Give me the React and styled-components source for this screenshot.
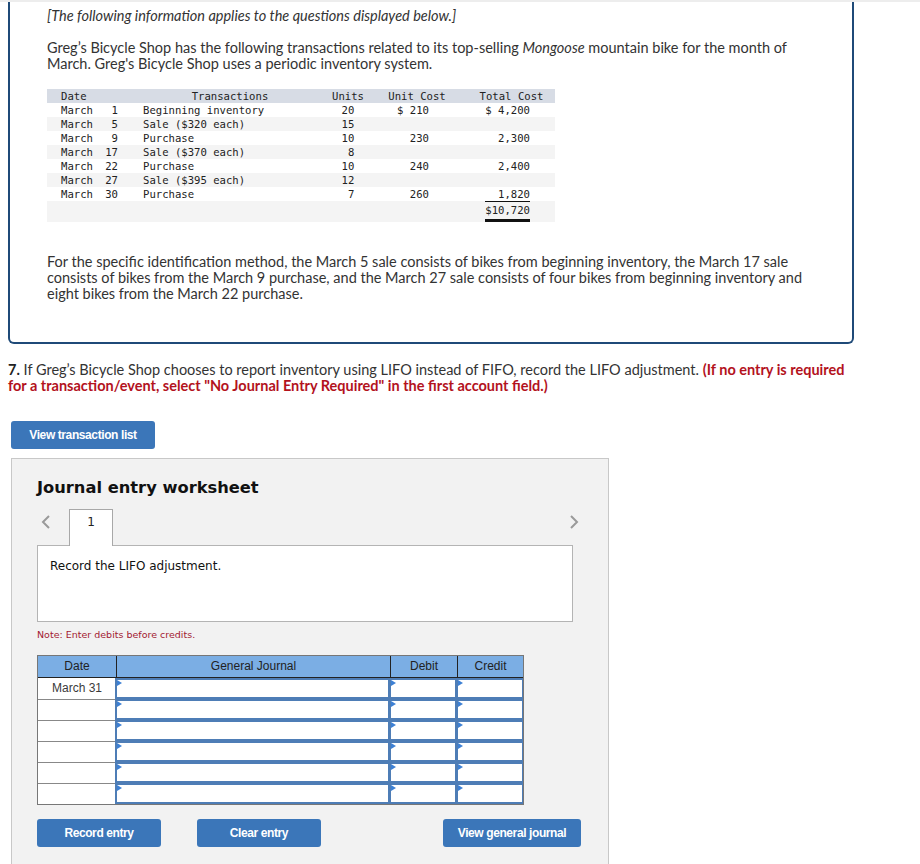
import React from 'react';
import styled, { createGlobalStyle } from 'styled-components';

const GlobalStyle = createGlobalStyle`
  body {
    margin: 0;
    background: #fff;
    font-family: 'Lato', 'Open Sans', sans-serif;
    color: #333;
  }
`;

const transactions = [
  { day: '1', label: 'Beginning inventory', units: '20', unitCost: '$ 210', total: '$ 4,200' },
  { day: '5', label: 'Sale ($320 each)', units: '15', unitCost: '', total: '' },
  { day: '9', label: 'Purchase', units: '10', unitCost: '230', total: '2,300' },
  { day: '17', label: 'Sale ($370 each)', units: ' 8', unitCost: '', total: '' },
  { day: '22', label: 'Purchase', units: '10', unitCost: '240', total: '2,400' },
  { day: '27', label: 'Sale ($395 each)', units: '12', unitCost: '', total: '' },
  { day: '30', label: 'Purchase', units: ' 7', unitCost: '260', total: '1,820', underline: true },
];

const journalRows = ['March 31', '', '', '', '', ''];

const Page = styled.div`
  border-top: 2px solid #ededed;
`;

const InfoBox = styled.div`
  margin-left: 8px;
  width: 846px;
  box-sizing: border-box;
  border: 2px solid #1f4a78;
  border-top: none;
  border-radius: 0 0 6px 6px;
  padding: 6px 38px 40px 37px;
`;

const Text = styled.p`
  margin: ${p => p.$top || 0}px 0 0;
  font-size: 14.5px;
  line-height: 16px;
  font-style: ${p => (p.$italic ? 'italic' : 'normal')};
`;

const DataTable = styled.div`
  margin-top: 17px;
  width: 508px;
  font-family: 'DejaVu Sans Mono', 'Liberation Mono', monospace;
  font-size: 10.6px;
  color: #222;
`;

const DataRow = styled.div`
  display: grid;
  grid-template-columns: 83px 200px 36px 102px 87px;
  height: ${p => (p.$total ? 21 : 14)}px;
  line-height: 14px;
  white-space: pre;
  background: ${p => (p.$head ? '#d7dce5' : p.$shade ? '#f4f4f4' : '#fff')};
`;

const DateCell = styled.div`
  display: flex;
  justify-content: space-between;
  padding: 0 12px 0 14px;
`;

const Cell = styled.div`
  text-align: ${p => p.$align || 'left'};
  padding-left: ${p => p.$pl || 0}px;
  padding-right: ${p => p.$pr || 0}px;
`;

const Amount = styled.span`
  display: inline-block;
  min-width: 7ch;
  text-align: right;
  border-bottom: ${p => (p.$double ? '3px solid #111' : p.$line ? '1px solid #111' : 'none')};
  line-height: ${p => (p.$double ? 18 : 13)}px;
`;

const Question = styled.div`
  margin: 18px 0 0 8px;
  max-width: 845px;
  font-size: 14.5px;
  line-height: 16px;
  color: #333;
`;

const Strong = styled.b`
  color: ${p => (p.$red ? '#b3121d' : '#222')};
`;

const BlueButton = styled.button`
  height: 28px;
  width: ${p => p.$w}px;
  border: none;
  border-radius: 3px;
  background: #3b76b9;
  color: #fff;
  font-family: 'Liberation Sans', Arial, sans-serif;
  font-weight: bold;
  font-size: 12px;
  letter-spacing: -0.4px;
  padding: 0;
  cursor: pointer;
`;

const TopButton = styled(BlueButton)`
  display: block;
  margin: 27px 0 0 11px;
`;

const Worksheet = styled.div`
  margin: 9px 0 0 11px;
  width: 598px;
  box-sizing: border-box;
  background: #f2f2f2;
  border: 1px solid #c8c8c8;
  border-bottom: none;
  padding: 19px 0 20px 25px;
`;

const Title = styled.h2`
  margin: 0;
  font-family: 'DejaVu Sans', Verdana, sans-serif;
  font-size: 16.3px;
  line-height: 20px;
  font-weight: bold;
  color: #111;
`;

const TabBar = styled.div`
  margin-top: 11px;
  width: 536px;
  height: 36px;
  display: flex;
  align-items: flex-start;
`;

const Arrow = styled.svg`
  flex: none;
  margin-top: 6px;
  margin-left: ${p => (p.$end ? 'auto' : '4px')};
  margin-right: ${p => (p.$end ? '-6px' : '0')};
`;

const Tab = styled.div`
  position: relative;
  z-index: 1;
  flex: none;
  margin-left: 18px;
  width: 44px;
  height: 37px;
  box-sizing: border-box;
  border: 1px solid #a8a8a8;
  border-bottom: none;
  background: #fff;
  text-align: center;
  font-family: 'DejaVu Sans', Verdana, sans-serif;
  font-size: 12px;
  line-height: 24px;
  color: #222;
`;

const Prompt = styled.div`
  width: 536px;
  height: 77px;
  box-sizing: border-box;
  background: #fff;
  border: 1px solid #b4b4b4;
  padding: 13px 12px;
  font-family: 'DejaVu Sans', Verdana, sans-serif;
  font-size: 12px;
  line-height: 14px;
  color: #111;
`;

const Note = styled.div`
  margin-top: 7px;
  font-family: 'DejaVu Sans', Verdana, sans-serif;
  font-size: 9.5px;
  line-height: 12px;
  color: #a31a33;
`;

const Journal = styled.div`
  margin-top: 14px;
  width: 485px;
  border: 1px solid #777;
  font-family: 'Liberation Sans', Arial, sans-serif;
  font-size: 12px;
  color: #222;
`;

const JournalRow = styled.div`
  display: grid;
  grid-template-columns: 78px 274px 67px 66px;
  height: 21px;
  background: ${p => (p.$head ? '#7baee4' : '#fff')};
  border-bottom: ${p => (p.$head ? '1px solid #222' : 'none')};
`;

const HeadCell = styled.div`
  text-align: center;
  line-height: 21px;
  border-left: ${p => (p.$first ? 'none' : '1px solid #222')};
`;

const DateEntry = styled.div`
  text-align: center;
  line-height: 20px;
  color: #3a3a3a;
  border-top: ${p => (p.$first ? 'none' : '1px solid #888')};
`;

const InputCell = styled.div`
  position: relative;
  background: #fff;
  border: 2px solid #4e7db6;
  border-right-width: ${p => (p.$last ? 1 : 2)}px;
  margin-left: -1px;
  &::before {
    content: '';
    position: absolute;
    top: 0;
    left: 0;
    border-style: solid;
    border-width: 3px 0 3px 5px;
    border-color: transparent transparent transparent #3d80d4;
  }
`;

const ButtonRow = styled.div`
  margin-top: 14px;
  width: 544px;
  display: flex;
  gap: 36px;
  & > :last-child {
    margin-left: auto;
  }
`;

const Chevron = ({ dir }) => (
  <Arrow $end={dir === 'right'} width="10" height="14" viewBox="0 0 10 14">
    <polyline
      points={dir === 'left' ? '8,1 2,7 8,13' : '2,1 8,7 2,13'}
      fill="none"
      stroke="#9a9a9a"
      strokeWidth="2"
    />
  </Arrow>
);

export default function App() {
  return (
    <Page>
      <GlobalStyle />
      <InfoBox>
        <Text $italic>[The following information applies to the questions displayed below.]</Text>
        <Text $top={16}>
          Greg’s Bicycle Shop has the following transactions related to its top-selling <i>Mongoose</i> mountain bike for the month of
          March. Greg's Bicycle Shop uses a periodic inventory system.
        </Text>
        <DataTable>
          <DataRow $head>
            <DateCell>Date</DateCell>
            <Cell $align="center">Transactions</Cell>
            <Cell $align="center">Units</Cell>
            <Cell $align="center">Unit Cost</Cell>
            <Cell $align="center">Total Cost</Cell>
          </DataRow>
          {transactions.map((t, i) => (
            <DataRow key={t.day} $shade={i % 2 === 1}>
              <DateCell>
                <span>March</span>
                <span>{t.day}</span>
              </DateCell>
              <Cell $pl={13}>{t.label}</Cell>
              <Cell $align="center">{t.units}</Cell>
              <Cell $align="right" $pr={39}>{t.unitCost}</Cell>
              <Cell $align="right" $pr={25}>
                <Amount $line={t.underline}>{t.total}</Amount>
              </Cell>
            </DataRow>
          ))}
          <DataRow $shade $total>
            <div />
            <div />
            <div />
            <div />
            <Cell $align="right" $pr={25}>
              <Amount $double>$10,720</Amount>
            </Cell>
          </DataRow>
        </DataTable>
        <Text $top={32}>
          For the specific identification method, the March 5 sale consists of bikes from beginning inventory, the March 17 sale
          consists of bikes from the March 9 purchase, and the March 27 sale consists of four bikes from beginning inventory and
          eight bikes from the March 22 purchase.
        </Text>
      </InfoBox>

      <Question>
        <Strong>7.</Strong> If Greg’s Bicycle Shop chooses to report inventory using LIFO instead of FIFO, record the LIFO adjustment.{' '}
        <Strong $red>(If no entry is required for a transaction/event, select "No Journal Entry Required" in the first account field.)</Strong>
      </Question>

      <TopButton $w={144}>View transaction list</TopButton>

      <Worksheet>
        <Title>Journal entry worksheet</Title>
        <TabBar>
          <Chevron dir="left" />
          <Tab>1</Tab>
          <Chevron dir="right" />
        </TabBar>
        <Prompt>Record the LIFO adjustment.</Prompt>
        <Note>Note: Enter debits before credits.</Note>
        <Journal>
          <JournalRow $head>
            <HeadCell $first>Date</HeadCell>
            <HeadCell>General Journal</HeadCell>
            <HeadCell>Debit</HeadCell>
            <HeadCell>Credit</HeadCell>
          </JournalRow>
          {journalRows.map((d, i) => (
            <JournalRow key={i}>
              <DateEntry $first={i === 0}>{d}</DateEntry>
              <InputCell />
              <InputCell />
              <InputCell $last />
            </JournalRow>
          ))}
        </Journal>
        <ButtonRow>
          <BlueButton $w={124}>Record entry</BlueButton>
          <BlueButton $w={124}>Clear entry</BlueButton>
          <BlueButton $w={138}>View general journal</BlueButton>
        </ButtonRow>
      </Worksheet>
    </Page>
  );
}
